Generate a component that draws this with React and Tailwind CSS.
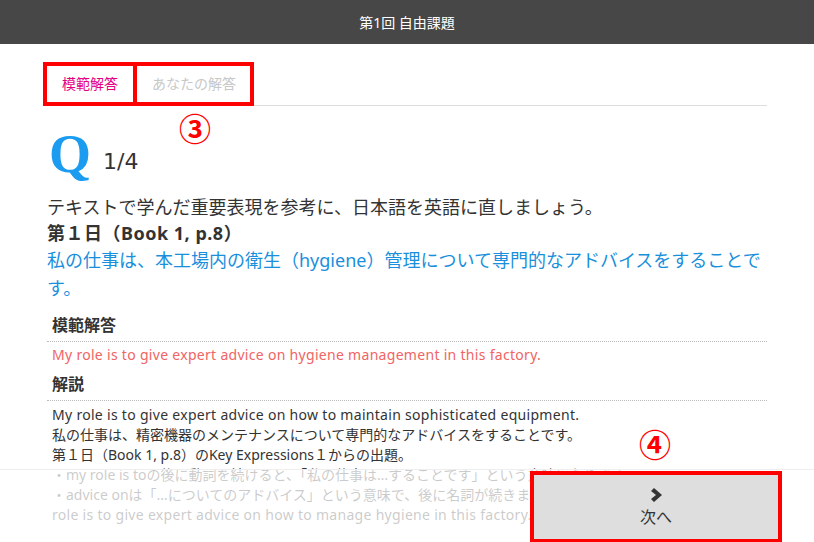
import React from "react";

const jp = { fontFamily: '"Noto Sans", "Noto Sans CJK JP", sans-serif' };

export default function App() {
  return (
    <div
      className="relative h-[542px] w-[814px] overflow-hidden bg-white text-[#333]"
      style={jp}
    >
      <header className="flex h-[44px] items-center justify-center bg-[#474747] text-[14px] text-white">
        第1回 自由課題
      </header>

      <main className="relative mx-auto w-[720px] pt-[18px]">
        {/* tabs */}
        <div className="relative flex h-[44px] border-b border-[#dddddd] text-[14px]">
          <div className="flex items-center px-[15px] text-[#e4007f]">模範解答</div>
          <div className="flex items-center px-[19px] text-[#c8c8c8]">あなたの解答</div>
          <div className="absolute left-[-4px] top-0 h-[44px] w-[94px] border-4 border-[#ff0000]" />
          <div className="absolute left-[86px] top-0 h-[44px] w-[121px] border-4 border-[#ff0000]" />
        </div>
        <div className="absolute left-[132px] top-[67px] text-[32px] font-bold leading-[36px] text-[#ff0000]">
          ③
        </div>

        {/* question */}
        <div className="mt-[21px] flex h-[54px] items-baseline">
          <span
            className="ml-[2px] text-[54px] font-bold leading-[54px] text-[#1c9cf0]"
            style={{ fontFamily: '"Liberation Serif", "Times New Roman", serif' }}
          >
            Q
          </span>
          <span
            className="relative top-[-3px] ml-[12px] text-[22px] leading-[22px] text-[#333]"
            style={{ fontFamily: '"DejaVu Sans", Verdana, sans-serif' }}
          >
            1/4
          </span>
        </div>

        <p className="mt-[12px] text-[18px] leading-[28px]">
          テキストで学んだ重要表現を参考に、日本語を英語に直しましょう。
        </p>
        <p className="text-[18px] font-bold leading-[25px] tracking-[0.5px]">第１日（Book 1, p.8）</p>
        <p className="text-[18px] leading-[28px] text-[#1a8fdc]">
          私の仕事は、本工場内の衛生（hygiene）管理について専門的なアドバイスをすることです。
        </p>

        {/* model answer */}
        <div className="mt-[11px] border-b border-dotted border-[#bbbbbb] pb-[4px] pl-[5px] text-[16px] font-bold leading-[24px]">
          模範解答
        </div>
        <p className="mt-[3px] pl-[5px] text-[14px] leading-[20px] tracking-[0.3px] text-[#f06464]">
          My role is to give expert advice on hygiene management in this factory.
        </p>

        <div className="mt-[7px] border-b border-dotted border-[#bbbbbb] pb-[4px] pl-[5px] text-[16px] font-bold leading-[24px]">
          解説
        </div>
        <div className="mt-[4px] pl-[5px] text-[14px] leading-[20px]">
          <div className="whitespace-nowrap tracking-[0.3px]">My role is to give expert advice on how to maintain sophisticated equipment.</div>
          <div className="whitespace-nowrap">私の仕事は、精密機器のメンテナンスについて専門的なアドバイスをすることです。</div>
          <div className="whitespace-nowrap">第１日（Book 1, p.8）のKey Expressions１からの出題。</div>
          <div className="whitespace-nowrap">・my role is toの後に動詞を続けると、「私の仕事は…することです」という意味になります。</div>
          <div className="whitespace-nowrap">・advice onは「…についてのアドバイス」という意味で、後に名詞が続きます。別解：My</div>
          <div className="whitespace-nowrap tracking-[0.3px]">role is to give expert advice on how to manage hygiene in this factory.</div>
        </div>
      </main>

      <div className="absolute left-[639px] top-[427px] text-[32px] font-bold leading-[36px] text-[#ff0000]">
        ④
      </div>

      {/* footer */}
      <footer className="absolute bottom-0 left-0 flex h-[73px] w-full justify-end border-t border-[#eeeeee] bg-white/75 pr-[32px] pt-[1px]">
        <div className="h-[72px] w-[252px] border-4 border-[#ff0000]">
          <button className="flex h-full w-full flex-col items-center justify-center bg-[#dedede] text-[#333]">
            <svg width="12" height="14" viewBox="0 0 12 14" className="ml-[2px]">
              <polygon points="0,3 3,0 11,7 3,14 0,11 5,7" fill="#333" />
            </svg>
            <span className="mt-[5px] text-[16px] leading-[20px]">次へ</span>
          </button>
        </div>
      </footer>
    </div>
  );
}
